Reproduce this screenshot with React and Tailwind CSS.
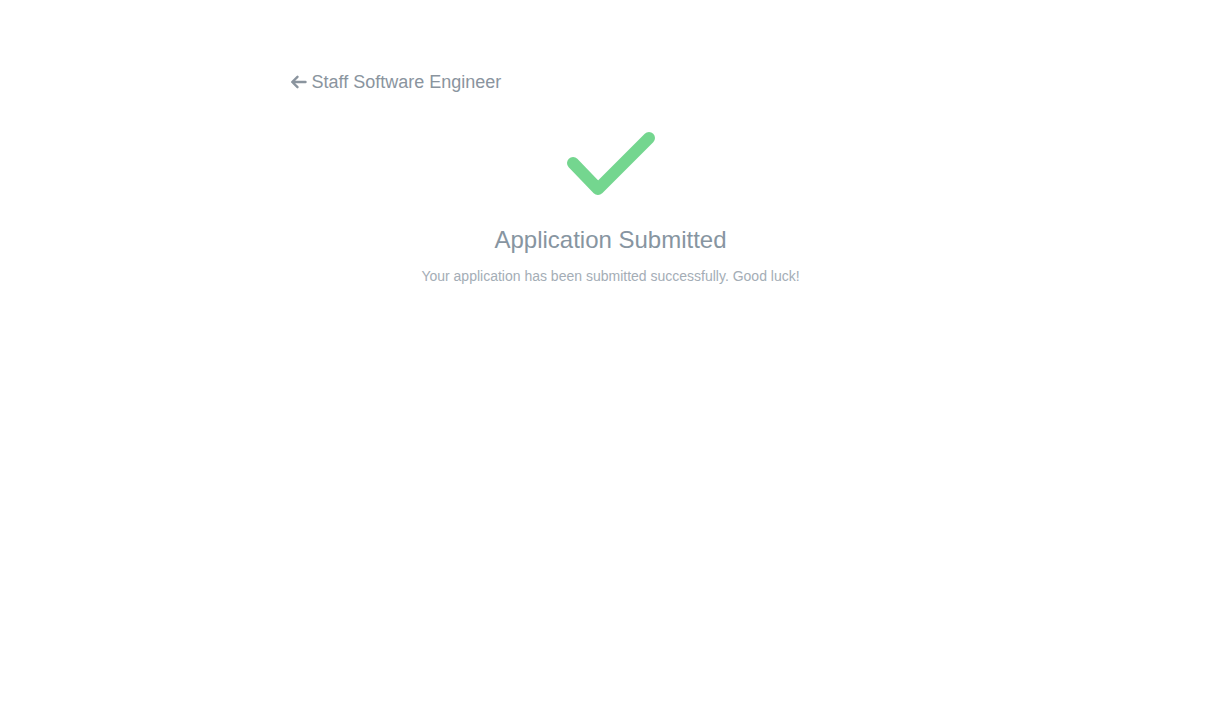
import React from "react";

function CheckIcon() {
    return (
        <svg width="100" height="70" viewBox="0 0 100 70" fill="none">
            <path
                d="M12 35 L37 61 L88 10"
                stroke="#74d68f"
                strokeWidth="12"
                strokeLinecap="round"
                strokeLinejoin="round"
            />
        </svg>
    );
}

export default function App() {
    return (
        <div className="min-h-screen bg-white font-['Liberation_Sans',Arial,sans-serif]">
            <div className="max-w-[642px] mx-auto pt-[68px]">
                <a href="#" className="inline-flex items-center gap-[5px] text-[18px] leading-[28px] text-[#8a949e]">
                    <svg width="17" height="14" viewBox="0 0 17 14" fill="none">
                        <path d="M15.5 7 H2.5 M7.5 1.8 L2.2 7 L7.5 12.2" stroke="#8a949e" strokeWidth="2.4" strokeLinecap="round" strokeLinejoin="round" />
                    </svg>
                    Staff Software Engineer
                </a>
                <div className="flex flex-col items-center mt-[32px]">
                    <CheckIcon />
                    <h1 className="mt-[26px] text-[24px] leading-[32px] text-[#8795a1]">Application Submitted</h1>
                    <p className="mt-[10px] text-[14px] leading-[20px] text-[#a4adb6]">
                        Your application has been submitted successfully. Good luck!
                    </p>
                </div>
            </div>
        </div>
    );
}
